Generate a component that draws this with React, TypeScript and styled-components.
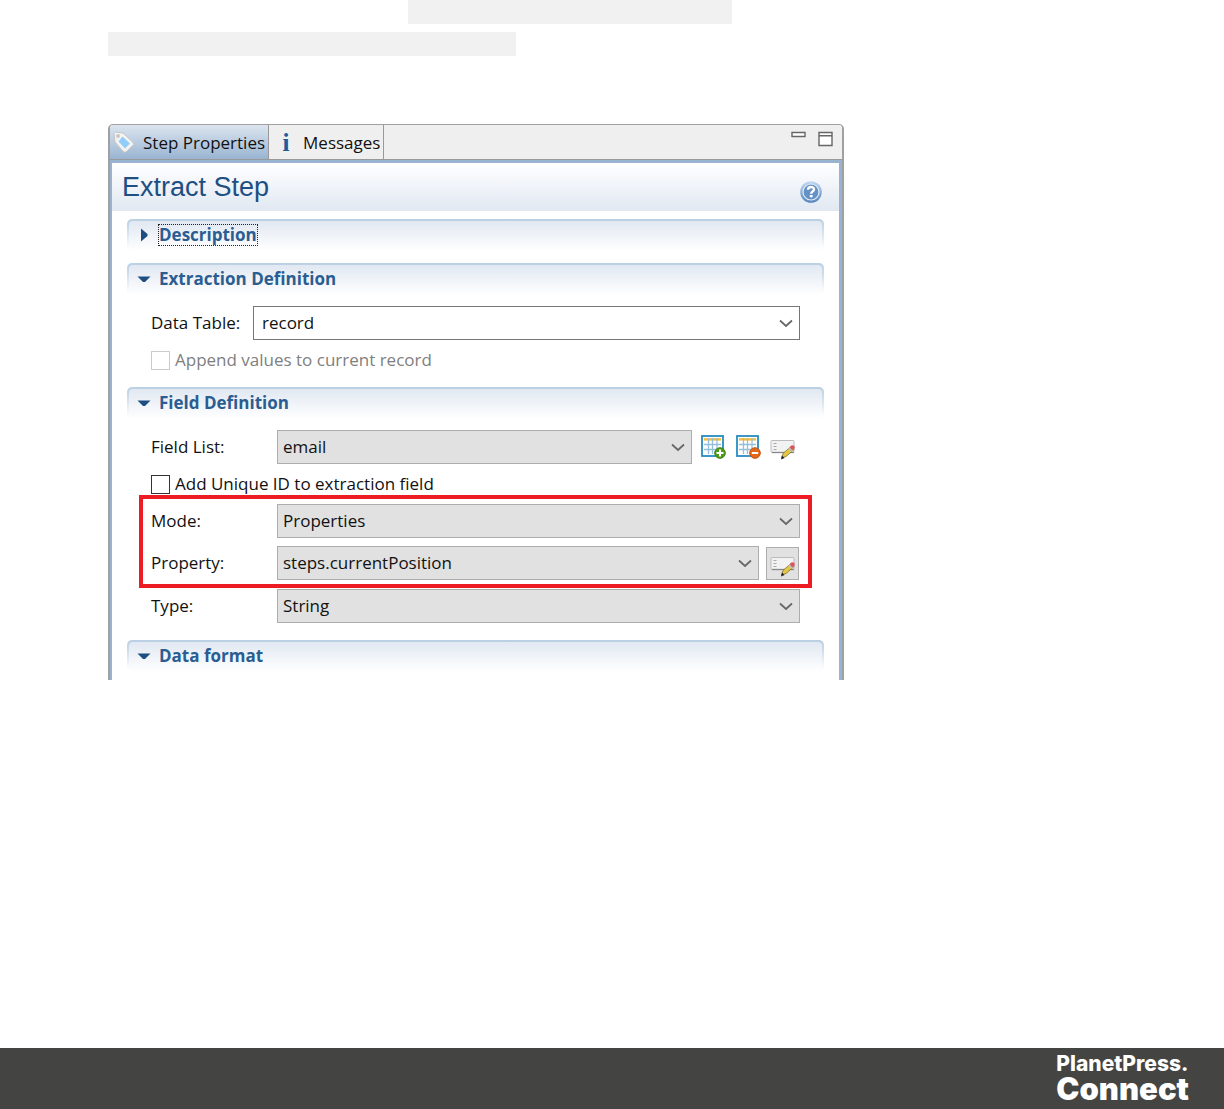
import React, { useState } from "react";
import styled, { createGlobalStyle } from "styled-components";

const GlobalStyle = createGlobalStyle`
  *, *::before, *::after { box-sizing: border-box; }
  body { margin: 0; background: #fff; }
  button, select, input { font: inherit; color: inherit; }
`;

const Page = styled.div`
  min-height: 100vh;
  display: flex;
  flex-direction: column;
  font: 17px/24px "Open Sans", "Noto Sans", sans-serif;
  color: #111;
`;

const Main = styled.main`
  flex: 1;
  padding: 0 108px 48px;
`;

const CodeLines = styled.div`
  display: flex;
  flex-direction: column;
  gap: 8px;
  margin-bottom: 68px;
`;

const CodeBar = styled.div<{ $indent: number; $length: number }>`
  height: 24px;
  max-width: ${(p) => p.$length}px;
  margin-left: ${(p) => p.$indent}px;
  background: #f1f1f1;
`;

const Panel = styled.section`
  max-width: 736px;
  border: 2px solid #a0a0a0;
  border-top-width: 1px;
  border-bottom: 0;
  border-radius: 5px 5px 0 0;
  overflow: hidden;
`;

const TabBar = styled.div`
  display: flex;
  height: 35px;
  background: #efefef;
  border-bottom: 1px solid #999;
`;

const Tab = styled.button<{ $active?: boolean }>`
  display: flex;
  align-items: center;
  gap: 2px;
  padding: 2px 3px 0 2px;
  border: 0;
  border-right: 1px solid #999;
  background: ${(p) => (p.$active ? "linear-gradient(#dce5ef, #99b4d1)" : "transparent")};
  white-space: nowrap;
`;

const InfoMark = styled.span`
  width: 30px;
  text-align: center;
  font: bold 25px/24px "Liberation Serif", serif;
  color: #1c5c9c;
`;

const WindowButtons = styled.div`
  display: flex;
  align-items: flex-start;
  gap: 10px;
  margin-left: auto;
  padding: 5px 8px 0 0;
`;

const IconButton = styled.button<{ $framed?: boolean }>`
  display: flex;
  align-items: center;
  justify-content: center;
  flex: none;
  padding: 0;
  border: ${(p) => (p.$framed ? "1px solid #adadad" : "0")};
  background: ${(p) => (p.$framed ? "#e1e1e1" : "transparent")};
  width: ${(p) => (p.$framed ? "33px" : "auto")};
  height: ${(p) => (p.$framed ? "33px" : "auto")};
`;

const Form = styled.div`
  border: 3px solid #99b4d1;
  border-left-width: 2px;
  border-bottom: 0;
  padding-bottom: 8px;
`;

const FormHeader = styled.header`
  display: flex;
  align-items: flex-end;
  justify-content: space-between;
  height: 48px;
  margin-bottom: 8px;
  padding: 0 17px 8px 10px;
  background: linear-gradient(#fff, #e1e8f2);
`;

const Title = styled.h1`
  margin: 0;
  font: 27px/32px "Liberation Sans", Arial, sans-serif;
  color: #1d4f83;
`;

const Group = styled.section<{ $closed?: boolean }>`
  margin: 0 15px;
  padding-bottom: ${(p) => (p.$closed ? "12px" : "0")};
`;

const GroupHeader = styled.h2`
  margin: 0;
  height: 32px;
  display: flex;
  padding: 2px 2px 0;
  border-radius: 5px 5px 0 0;
  background: linear-gradient(#b9cfe3 0, #c9d9e8 8px, #fff 30px);
`;

const GroupToggle = styled.button`
  flex: 1;
  display: flex;
  align-items: center;
  gap: 7px;
  padding: 0 7px 2px;
  border: 0;
  border-radius: 4px 4px 0 0;
  background: linear-gradient(#e1e8f2, #fff);
  font: bold 17px/20px "Open Sans", "Noto Sans", sans-serif;
  color: #2a5d91;
`;

const GroupLabel = styled.span<{ $focused?: boolean }>`
  outline: ${(p) => (p.$focused ? "1px dotted #222" : "none")};
`;

const GroupBody = styled.div`
  padding: 11px 24px 17px;
`;

const Row = styled.div`
  display: flex;
  align-items: center;
  height: 34px;
`;

const RowLabel = styled.label<{ $narrow?: boolean }>`
  flex: none;
  width: ${(p) => (p.$narrow ? "102px" : "126px")};
`;

const SelectBox = styled.div<{ $plain?: boolean }>`
  flex: 1;
  min-width: 0;
  height: 34px;
  display: grid;
  align-items: center;
  border: 1px solid ${(p) => (p.$plain ? "#767676" : "#adadad")};
  background: ${(p) => (p.$plain ? "#fff" : "#e1e1e1")};

  & > select, & > svg { grid-area: 1 / 1; }
  & > svg { justify-self: end; margin-right: 5px; pointer-events: none; }
`;

const NativeSelect = styled.select<{ $plain?: boolean }>`
  appearance: none;
  width: 100%;
  height: 32px;
  padding: 0 28px 0 ${(p) => (p.$plain ? "8px" : "5px")};
  border: 0;
  outline: 0;
  background: transparent;
`;

const Tools = styled.div`
  display: flex;
  gap: 8px;
  padding: 0 4px 0 7px;
`;

const PropertyTool = styled.div`
  padding: 1px 1px 0 7px;
`;

const Check = styled.label<{ $disabled?: boolean }>`
  display: flex;
  align-items: center;
  gap: 5px;
  height: 20px;
  margin-top: 10px;
  color: ${(p) => (p.$disabled ? "#808080" : "inherit")};
`;

const CheckInput = styled.input`
  appearance: none;
  width: 19px;
  height: 19px;
  margin: 0;
  border: 1px solid #333;
  background: #fff;
  &:disabled { border-color: #ccc; }
  &:checked { background: #245a8f; box-shadow: inset 0 0 0 3px #fff; }
`;

const Highlight = styled.div`
  display: flex;
  flex-direction: column;
  gap: 8px;
  margin: 1px -12px;
  padding: 5px 8px 4px;
  border: 4px solid #ed1c24;
`;

const Footer = styled.footer`
  display: flex;
  justify-content: flex-end;
  height: 61px;
  padding: 5px 35px 0;
  background: #444542;
  color: #fff;
`;

const Brand = styled.div`
  display: flex;
  flex-direction: column;
  font-family: Inter, sans-serif;
  font-weight: 900;
`;

const BrandTop = styled.span`
  font-size: 21px;
  font-weight: 800;
  line-height: 22px;
`;

const BrandName = styled.span`
  font-size: 31px;
  line-height: 28px;
`;

const TagIcon = () => (
  <svg width="29" height="24" viewBox="0 0 29 24" aria-hidden="true">
    <path d="M2 2.500 3.500 1 11 2l10 9.500.8 2L14 21l-2 .2L3 11z" fill="#f5f3ef" stroke="#c3c6cb" />
    <path d="m10.500 5.500 7.500 7-5 5-6.500-7z" fill="#90cdfa" />
    <circle cx="6" cy="5" r="2" fill="#c9c9c9" />
  </svg>
);

const Chevron = () => (
  <svg width="16" height="12" viewBox="0 0 16 12" aria-hidden="true">
    <path d="m2 3.500 6 5.500 6-5.500" fill="none" stroke="#666" strokeWidth="1.700" />
  </svg>
);

const Arrow = ({ open }: { open: boolean }) => (
  <svg width="16" height="14" viewBox="0 0 16 14" aria-hidden="true">
    <path d={open ? "M1.500 4.500h13L9 10H7z" : "M5 .5v13l6.500-5.500v-2z"} fill="#1c4e82" />
  </svg>
);

const HelpIcon = () => (
  <svg width="22" height="22" viewBox="0 0 22 22" aria-hidden="true">
    <defs>
      <linearGradient id="ring" x2="0" y2="1">
        <stop stopColor="#c3d9f1" />
        <stop offset="1" stopColor="#5785bd" />
      </linearGradient>
    </defs>
    <circle cx="11" cy="11" r="10.800" fill="url(#ring)" />
    <circle cx="11" cy="11" r="8" fill="#6491c6" stroke="#e2edf8" strokeWidth="1.200" />
    <path d="M8 8.800C8 5 14.200 5.200 14 8.500c-.1 2-2.800 1.800-2.800 4.300" fill="none" stroke="#fff" strokeWidth="2.400" />
    <rect x="9.800" y="14" width="2.800" height="2.300" fill="#fff" />
  </svg>
);

const MinimizeIcon = () => (
  <svg width="17" height="10" viewBox="0 0 17 10" aria-hidden="true">
    <path d="M2 2.500h13v4H2z" fill="#fff" stroke="#666" strokeWidth="1.400" />
  </svg>
);

const MaximizeIcon = () => (
  <svg width="17" height="18" viewBox="0 0 17 18" aria-hidden="true">
    <path d="M2 2.500h13v13H2zM2 5.800h13" fill="#fff" stroke="#666" strokeWidth="1.400" />
  </svg>
);

const TableIcon = ({ kind }: { kind: "add" | "remove" }) => (
  <svg width="27" height="26" viewBox="0 0 27 26" aria-hidden="true">
    <rect x="3" y="2" width="21" height="20" fill="#fff" stroke="#288cc0" strokeWidth="1.800" />
    <path d="M5 5.400h17" stroke="#f6bd38" strokeWidth="2.400" />
    <path d="M5 10.500h17M5 15.500h17M9.500 4v16M13.500 4v16M18 4v16" stroke="#94bfdc" strokeWidth="1.300" />
    <circle cx="21" cy="19" r="5.300" fill={kind === "add" ? "#4c9d16" : "#e46817"} stroke={kind === "add" ? "#3b820e" : "#c6500d"} />
    <path d={kind === "add" ? "M17.500 19h7m-3.500-3.500v7" : "M17.800 19h6.400"} stroke="#fff" strokeWidth="2" />
  </svg>
);

const EditIcon = () => (
  <svg width="27" height="26" viewBox="0 0 27 26" aria-hidden="true">
    <rect x="2" y="6.500" width="23" height="12" rx="1" fill="#f2f2f2" stroke="#bbb" />
    <path d="M3 18.500h22" stroke="#888" strokeWidth="1.300" />
    <path d="M4.500 9.500h3m-3 3h3m-3 3h3" stroke="#aaa" />
    <path d="m12.500 24 1.500-4.500 8-7 3 3-8 7z" fill="#e2c845" stroke="#896f2b" strokeWidth=".8" />
    <path d="m12 25.500 1-4 2.500 2.500z" fill="#222" />
    <path d="m20 14 3 3" stroke="#b9c5ce" strokeWidth="2" />
    <circle cx="23.500" cy="13.500" r="2.200" fill="#dc5360" />
  </svg>
);

type SelectProps = { id: string; value: string; plain?: boolean };

const Select = ({ id, value, plain }: SelectProps) => (
  <SelectBox $plain={plain}>
    <NativeSelect id={id} $plain={plain} defaultValue={value}>
      <option>{value}</option>
    </NativeSelect>
    <Chevron />
  </SelectBox>
);

type SectionProps = { title: string; initiallyOpen?: boolean; focused?: boolean; children?: React.ReactNode };

const Section = ({ title, initiallyOpen = false, focused, children }: SectionProps) => {
  const [open, setOpen] = useState(initiallyOpen);
  return (
    <Group $closed={!open}>
      <GroupHeader>
        <GroupToggle aria-expanded={open} onClick={() => setOpen(!open)}>
          <Arrow open={open} />
          <GroupLabel $focused={focused}>{title}</GroupLabel>
        </GroupToggle>
      </GroupHeader>
      {open && children && <GroupBody>{children}</GroupBody>}
    </Group>
  );
};

export default function App() {
  return (
    <Page>
      <GlobalStyle />
      <Main>
        <CodeLines>
          <CodeBar $indent={300} $length={324} />
          <CodeBar $indent={0} $length={408} />
        </CodeLines>
        <Panel>
          <TabBar>
            <Tab $active>
              <TagIcon />
              Step Properties
            </Tab>
            <Tab>
              <InfoMark>i</InfoMark>
              Messages
            </Tab>
            <WindowButtons>
              <IconButton aria-label="Minimize"><MinimizeIcon /></IconButton>
              <IconButton aria-label="Maximize"><MaximizeIcon /></IconButton>
            </WindowButtons>
          </TabBar>
          <Form>
            <FormHeader>
              <Title>Extract Step</Title>
              <IconButton aria-label="Help"><HelpIcon /></IconButton>
            </FormHeader>
            <Section title="Description" focused />
            <Section title="Extraction Definition" initiallyOpen>
              <Row>
                <RowLabel $narrow htmlFor="table">Data Table:</RowLabel>
                <Select id="table" value="record" plain />
              </Row>
              <Check $disabled>
                <CheckInput type="checkbox" disabled />
                Append values to current record
              </Check>
            </Section>
            <Section title="Field Definition" initiallyOpen>
              <Row>
                <RowLabel htmlFor="field">Field List:</RowLabel>
                <Select id="field" value="email" />
                <Tools>
                  <IconButton aria-label="Add field"><TableIcon kind="add" /></IconButton>
                  <IconButton aria-label="Remove field"><TableIcon kind="remove" /></IconButton>
                  <IconButton aria-label="Rename field"><EditIcon /></IconButton>
                </Tools>
              </Row>
              <Check>
                <CheckInput type="checkbox" />
                Add Unique ID to extraction field
              </Check>
              <Highlight>
                <Row>
                  <RowLabel htmlFor="mode">Mode:</RowLabel>
                  <Select id="mode" value="Properties" />
                </Row>
                <Row>
                  <RowLabel htmlFor="property">Property:</RowLabel>
                  <Select id="property" value="steps.currentPosition" />
                  <PropertyTool>
                    <IconButton $framed aria-label="Edit property"><EditIcon /></IconButton>
                  </PropertyTool>
                </Row>
              </Highlight>
              <Row>
                <RowLabel htmlFor="type">Type:</RowLabel>
                <Select id="type" value="String" />
              </Row>
            </Section>
            <Section title="Data format" initiallyOpen />
          </Form>
        </Panel>
      </Main>
      <Footer>
        <Brand>
          <BrandTop>PlanetPress.</BrandTop>
          <BrandName>Connect</BrandName>
        </Brand>
      </Footer>
    </Page>
  );
}
